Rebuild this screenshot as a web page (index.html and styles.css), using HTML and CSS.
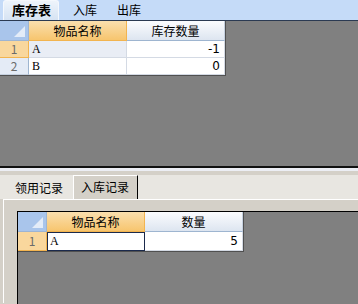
FILE: index.html
```html
<!DOCTYPE html>
<html lang="zh">
<head>
    <meta charset="UTF-8">
    <title>库存表</title>
    <link rel="stylesheet" href="styles.css">
</head>
<body>
    <div class="top-tabs">
        <div class="top-tab active">库存表</div>
        <div class="top-tab">入库</div>
        <div class="top-tab">出库</div>
    </div>

    <div class="grid-area top-area">
        <div class="grid">
            <div class="corner"><span class="tri"></span></div>
            <div class="col-head selected">物品名称</div>
            <div class="col-head">库存数量</div>

            <div class="row-head selected">1</div>
            <div class="cell sel-row">A</div>
            <div class="cell num">-1</div>

            <div class="row-head">2</div>
            <div class="cell">B</div>
            <div class="cell num">0</div>
        </div>
    </div>

    <div class="splitter"></div>

    <div class="bottom">
        <div class="bottom-tabs">
            <div class="bottom-tab">领用记录</div>
            <div class="bottom-tab active">入库记录</div>
        </div>
        <div class="panel">
            <div class="grid-area bottom-area">
                <div class="grid tall">
                    <div class="corner"><span class="tri"></span></div>
                    <div class="col-head selected">物品名称</div>
                    <div class="col-head">数量</div>

                    <div class="row-head selected">1</div>
                    <div class="cell current">A</div>
                    <div class="cell num">5</div>
                </div>
            </div>
        </div>
    </div>
</body>
</html>
```

FILE: styles.css
```css
body {
    margin: 0;
    width: 358px;
    height: 304px;
    overflow: hidden;
    background-color: #d4d0c8;
    font-family: "Noto Sans CJK SC", "DejaVu Sans", sans-serif;
    font-size: 12px;
    color: #000;
}

/* top tab strip */
.top-tabs {
    display: flex;
    height: 20px;
    background-color: #c5dbf8;
    padding-left: 3px;
    box-sizing: border-box;
    white-space: nowrap;
}

.top-tab {
    font-size: 12px;
    line-height: 19px;
    padding: 0 10px;
}

.top-tab.active {
    font-size: 13px;
    font-weight: bold;
    background: linear-gradient(#eef4fb, #d6e3f3);
    border: 1px solid #f4f8fd;
    border-bottom: none;
    border-radius: 3px 3px 0 0;
    padding: 0 7px 0 8px;
    margin-right: 4px;
    line-height: 18px;
}

/* grids */
.grid-area {
    background-color: #808080;
}

.top-area {
    height: 145px;
    border-top: 1px solid #2b3a52;
    border-bottom: 2px solid #111;
}

.grid {
    display: grid;
    grid-template-columns: 29px 98px 98px;
    grid-auto-rows: 17px;
    grid-template-rows: 20px;
    width: max-content;
    background-color: #fff;
    border-right: 1px solid #505050;
    border-bottom: 1px solid #505050;
}

.grid.tall {
    grid-auto-rows: 19px;
}

.corner {
    position: relative;
    background-color: #a9c5eb;
    border-right: 1px solid #9db4d2;
    border-bottom: 1px solid #9db4d2;
}

.tri {
    position: absolute;
    right: 3px;
    bottom: 3px;
    width: 0;
    height: 0;
    border-left: 11px solid transparent;
    border-bottom: 11px solid #e3ecf8;
}

.col-head {
    font-size: 12px;
    text-align: center;
    line-height: 19px;
    background: linear-gradient(#fbfcfe, #dde5f0);
    border-right: 1px solid #c5d0df;
    border-bottom: 1px solid #9eb5d0;
}

.col-head.selected {
    background: linear-gradient(#fadfae, #f7c56e);
    border-right: 1px solid #f2b450;
    border-bottom: 1px solid #f2b450;
}

.row-head {
    text-align: center;
    line-height: 16px;
    color: #6b6b6b;
    background-color: #e4ebf6;
    border-right: 1px solid #9eb5d0;
    border-bottom: 1px solid #c5d0df;
}

.tall .row-head {
    line-height: 18px;
}

.row-head.selected {
    background-color: #f9d79d;
    border-right: 1px solid #f2b450;
    border-bottom: 1px solid #f2b450;
}

.cell {
    font-family: "Liberation Serif", "Noto Sans CJK SC", serif;
    line-height: 16px;
    padding: 0 3px;
    border-right: 1px solid #d4dae4;
    border-bottom: 1px solid #d4dae4;
    background-color: #fff;
}

.tall .cell {
    line-height: 18px;
}

.cell.num {
    font-family: "DejaVu Sans", sans-serif;
    text-align: right;
    padding-right: 4px;
}

.cell.sel-row {
    background-color: #e9edf5;
}

.tall .cell.current {
    border: 1px solid #1b2a4c;
    line-height: 17px;
    padding: 0 2px;
}

/* splitter between the two halves */
.splitter {
    height: 3px;
    background-color: #eceef4;
    border-bottom: 4px solid #d4d0c8;
}

/* bottom tabs */
.bottom-tabs {
    display: flex;
    height: 24px;
    background-color: #e8e6e1;
    padding-left: 3px;
    align-items: flex-end;
    white-space: nowrap;
}

.bottom-tab {
    font-size: 12px;
    line-height: 22px;
    padding: 0 10px 0 12px;
}

.bottom-tab.active {
    background-color: #d4d0c8;
    border-top: 1px solid #fff;
    border-left: 1px solid #fff;
    border-right: 1px solid #000;
    height: 23px;
    line-height: 22px;
    padding: 0 8px 0 7px;
}

.panel {
    border-top: 1px solid #fff;
    margin-left: 3px;
    border-left: 1px solid #fff;
    padding: 11px 0 0 13px;
    height: 92px;
}

.bottom-area {
    height: 100px;
    border-top: 1px solid #000;
    border-left: 1px solid #000;
}
```
